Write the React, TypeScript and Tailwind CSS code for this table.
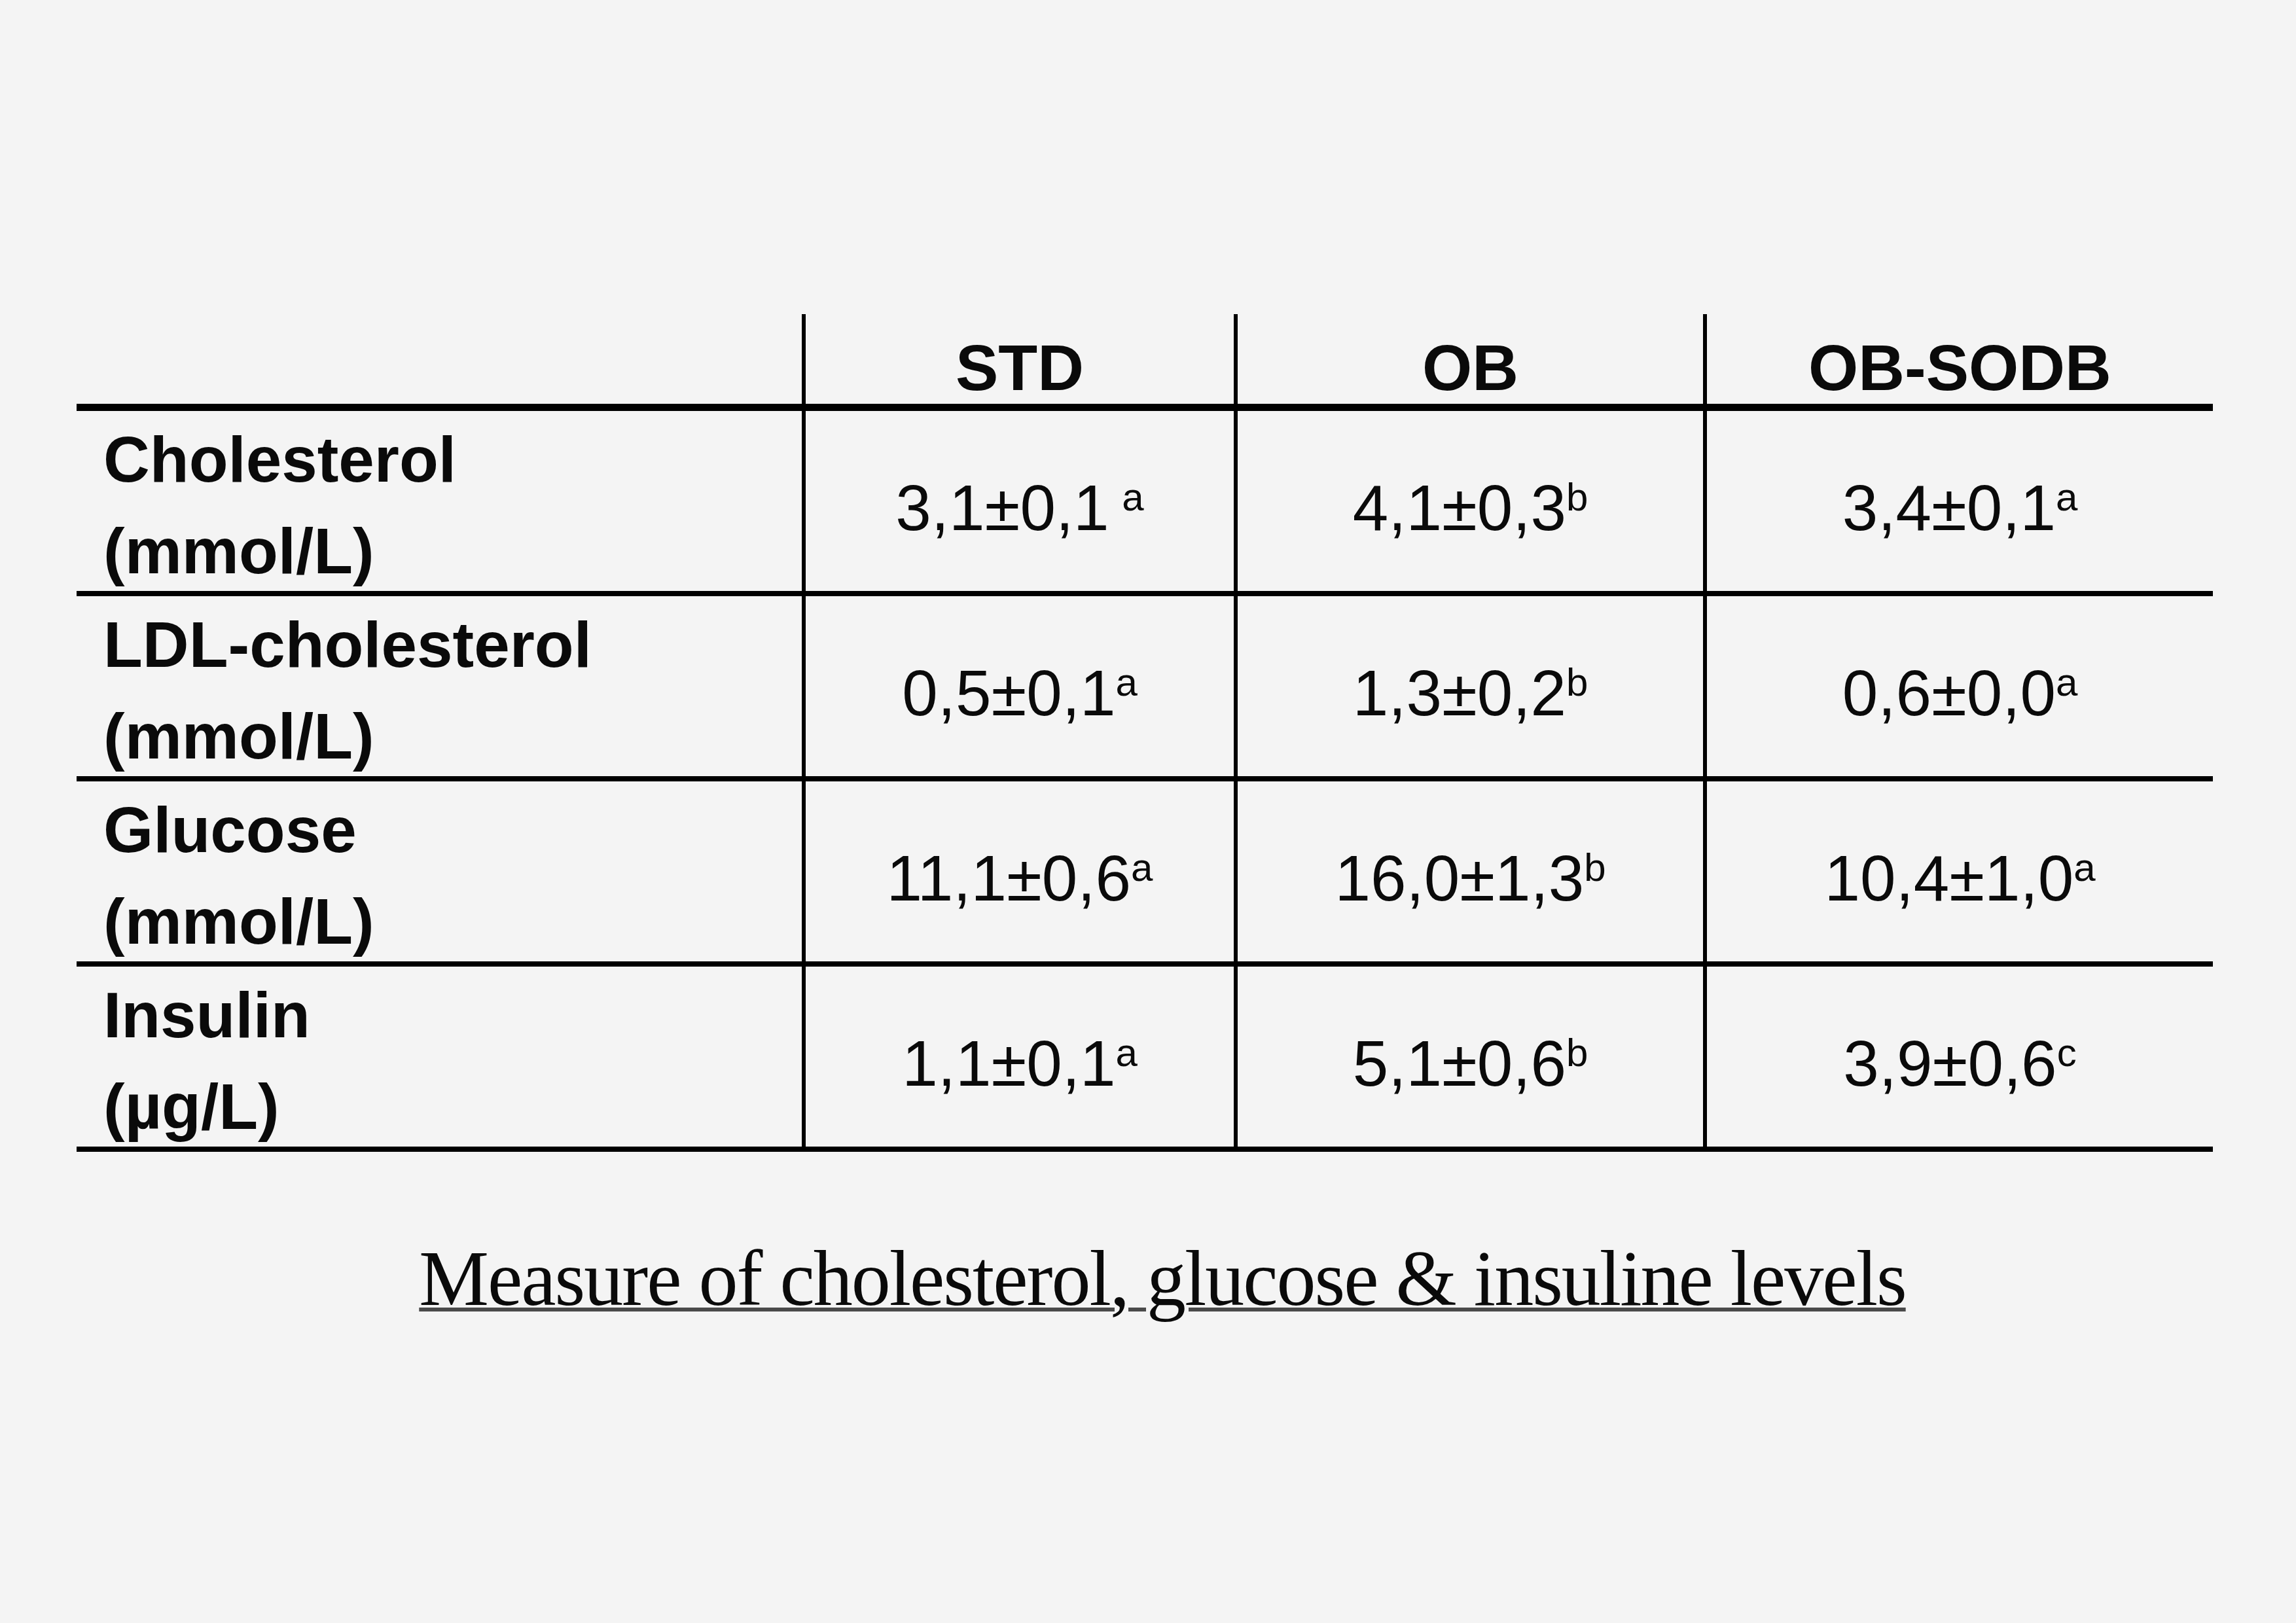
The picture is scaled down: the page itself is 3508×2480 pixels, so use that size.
import React from 'react'

interface Row {
  label: string
  unit: string
  values: { v: string; sup: string; gap?: boolean }[]
}

const rows: Row[] = [
  {
    label: 'Cholesterol',
    unit: '(mmol/L)',
    values: [
      { v: '3,1±0,1', sup: 'a', gap: true },
      { v: '4,1±0,3', sup: 'b' },
      { v: '3,4±0,1', sup: 'a' }
    ]
  },
  {
    label: 'LDL-cholesterol',
    unit: '(mmol/L)',
    values: [
      { v: '0,5±0,1', sup: 'a' },
      { v: '1,3±0,2', sup: 'b' },
      { v: '0,6±0,0', sup: 'a' }
    ]
  },
  {
    label: 'Glucose',
    unit: '(mmol/L)',
    values: [
      { v: '11,1±0,6', sup: 'a' },
      { v: '16,0±1,3', sup: 'b' },
      { v: '10,4±1,0', sup: 'a' }
    ]
  },
  {
    label: 'Insulin',
    unit: '(µg/L)',
    values: [
      { v: '1,1±0,1', sup: 'a' },
      { v: '5,1±0,6', sup: 'b' },
      { v: '3,9±0,6', sup: 'c' }
    ]
  }
]

const headers = ['STD', 'OB', 'OB-SODB']
const colWidths = ['w-[660px]', 'w-[717px]', 'w-[779px]']

const App: React.FC = () => {
  return (
    <div className="w-[3508px] h-[2480px] bg-[#f4f4f4] text-[#0a0a0a] overflow-hidden font-['Liberation_Sans',Arial,sans-serif]">
      {/* Table */}
      <div className="ml-[117px] mt-[480px] w-[3264px]">
        {/* Header */}
        <div className="flex h-[148px] border-b-[11px] border-black">
          <div className="w-[1108px]" />
          {headers.map((h, i) => (
            <div
              key={h}
              className={`${colWidths[i]} border-l-[6px] border-black flex items-end justify-center pb-[5px] text-[98px] leading-[100px] font-bold`}
            >
              {h}
            </div>
          ))}
        </div>

        {/* Body */}
        {rows.map((row) => (
          <div key={row.label} className="flex h-[283px] border-b-[8px] border-black">
            <div className="w-[1108px] pl-[41px] pt-[4px] text-[98px] leading-[140px] font-bold whitespace-nowrap">
              <div>{row.label}</div>
              <div>{row.unit}</div>
            </div>
            {row.values.map((val, i) => (
              <div
                key={i}
                className={`${colWidths[i]} border-l-[6px] border-black flex items-center justify-center pt-[20px] text-[98px] leading-[100px]`}
              >
                <span>
                  {val.v}
                  {val.gap ? '\u2009' : ''}
                  <sup className="text-[60px] leading-none">{val.sup}</sup>
                </span>
              </div>
            ))}
          </div>
        ))}
      </div>

      {/* Caption */}
      <div className="flex justify-center pl-[44px] mt-[134px]">
        <p className="font-['Liberation_Serif','Times_New_Roman',serif] text-[120px] leading-[120px] tracking-[-2px] underline decoration-[6px] underline-offset-[4px] decoration-[#4a4a4a] whitespace-nowrap">
          Measure of cholesterol, glucose &amp; insuline levels
        </p>
      </div>
    </div>
  )
}

export default App
